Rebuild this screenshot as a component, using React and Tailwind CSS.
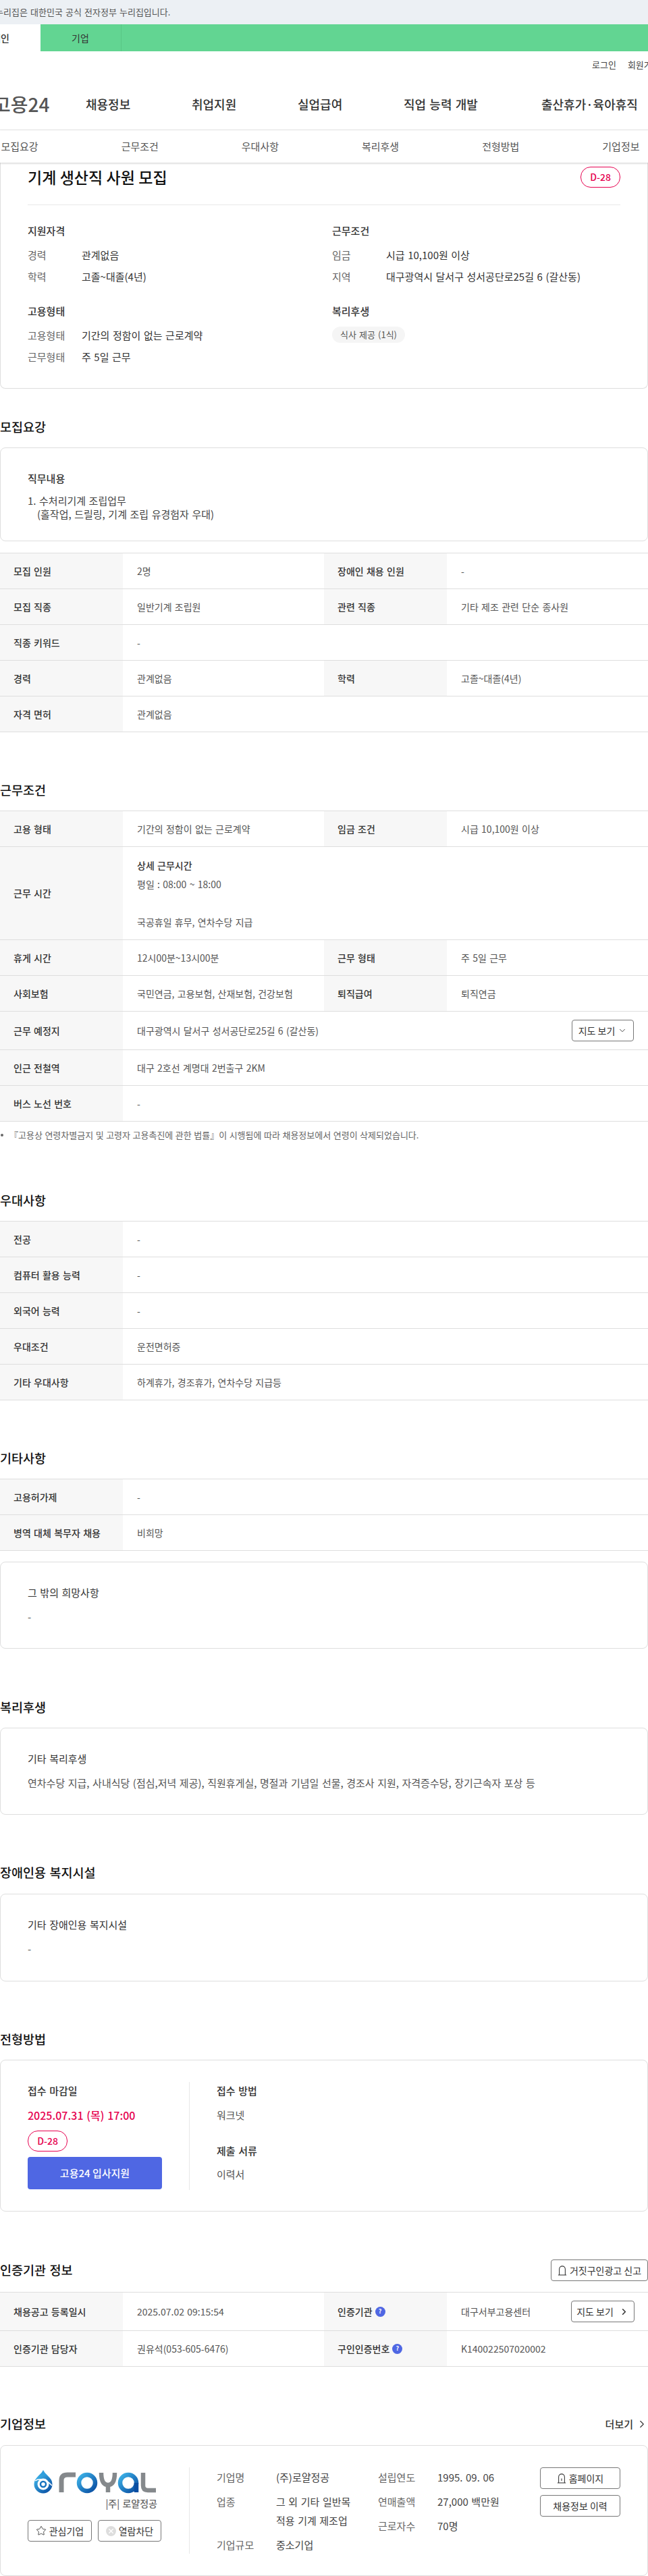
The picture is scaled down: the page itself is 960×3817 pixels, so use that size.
import React from 'react';
import { ChevronDown, ChevronRight, Star, X } from 'lucide-react';

const Lb = ({ children }) => (
  <div className="flex items-center bg-[#f7f7f7] pl-5 text-[14px] font-medium text-[#333]">{children}</div>
);
const Val = ({ children, span }) => (
  <div className={`flex items-center justify-between pl-[21px] text-[14px] text-[#555] ${span ? 'col-span-3' : ''}`}>{children}</div>
);

const Row = ({ a, b, c, d, h = 'h-[53px]', extra }) => (
  <div className={`grid ${h} grid-cols-[182px_298px_182px_298px] border-b border-[#dedede]`}>
    <Lb>{a}</Lb>
    {c === undefined ? (
      <Val span>{b}{extra}</Val>
    ) : (
      <>
        <Val>{b}</Val>
        <Lb>{c}</Lb>
        <Val>{d}{extra}</Val>
      </>
    )}
  </div>
);

const Table = ({ children, className = 'mt-4' }) => <div className={`${className} border-t border-[#dedede]`}>{children}</div>;

const Heading = ({ children, className }) => (
  <h2 className={`h-[30px] text-[18.5px] leading-[30px] font-medium text-[#111] ${className}`}>{children}</h2>
);

const Card = ({ children, className = '' }) => (
  <div className={`rounded-lg border border-[#dedede] bg-white ${className}`}>{children}</div>
);

const Badge = ({ className = '' }) => (
  <div className={`flex h-[31px] w-[59px] items-center justify-center rounded-[15px] border border-[#e6004f] text-[14px] font-medium text-[#e6004f] ${className}`}>D-28</div>
);

const InfoRow = ({ k, v }) => (
  <div className="flex h-8 items-center text-[15px]">
    <span className="w-20 text-[#666]">{k}</span>
    <span className="text-[#333]">{v}</span>
  </div>
);

const SubTitle = ({ children, className = '' }) => (
  <div className={`h-7 text-[15px] leading-7 font-medium text-[#333] ${className}`}>{children}</div>
);

const TextCard = ({ title, value, mt = 'mt-4', h = 'h-[129px]' }) => (
  <Card className={`${mt} ${h} pt-[31px] pl-10`}>
    <SubTitle className="!font-normal">{title}</SubTitle>
    <div className="mt-2 h-7 text-[15px] leading-7 text-[#555]">{value}</div>
  </Card>
);

const ArchIcon = ({ size = 16, dot }) => (
  <svg width={size} height={size + 4} viewBox="0 0 16 20" fill="none" stroke="#333" strokeWidth="1.2" className="shrink-0">
    <path d="M3 18V8a5 5 0 0 1 10 0v10" />
    <path d="M1 18h14" />
    {dot && <path d="M8 10.5v4" />}
  </svg>
);

const Help = () => (
  <span className="ml-1 flex h-[15px] w-[15px] items-center justify-center rounded-full bg-[#4f67e3] text-[9px] font-bold text-white">?</span>
);

const Logo = () => (
  <svg width="182" height="36" viewBox="0 0 182 36" fill="none">
    <defs>
      <linearGradient id="lg1" x1="0" y1="0" x2="1" y2="1">
        <stop offset="0" stopColor="#3db3e8" />
        <stop offset="1" stopColor="#0a4ea2" />
      </linearGradient>
    </defs>
    <path d="M14 0C11 6 6 8 3 14C8 9 20 9 25 14C22 8 17 6 14 0Z" fill="#2f9fdd" />
    <circle cx="14" cy="21" r="11" stroke="url(#lg1)" strokeWidth="5" />
    <circle cx="14" cy="21" r="4" fill="#fff" stroke="#1672bf" strokeWidth="2.5" />
    <path d="M2 16C8 12 18 13 27 23" stroke="#fff" strokeWidth="1.5" />
    <path d="M41 33V15Q41 7 50 7H62" stroke="#85898c" strokeWidth="7" />
    <circle cx="79" cy="19" r="12" stroke="url(#lg1)" strokeWidth="6.5" />
    <path d="M100 4Q100 22 110 22Q120 22 120 4M110 22V33" stroke="#85898c" strokeWidth="6.5" />
    <circle cx="140" cy="19" r="12" stroke="url(#lg1)" strokeWidth="6.5" />
    <path d="M152 19V33" stroke="#0a4ea2" strokeWidth="6.5" />
    <path d="M162 4V23Q162 30 169 30H181" stroke="#85898c" strokeWidth="6.5" />
  </svg>
);

const OutBtn = ({ children, className = '' }) => (
  <button className={`flex h-8 items-center justify-center rounded-[4px] border border-[#777] bg-white text-[14px] text-[#333] ${className}`}>{children}</button>
);

export default function App() {
  return (
    <div className="h-[3817px] w-[960px] overflow-hidden bg-white font-['Noto_Sans_CJK_KR','Noto_Sans',sans-serif] [word-spacing:1.2px] text-[#333]">
      {/* gov banner */}
      <div className="flex h-9 items-center overflow-hidden bg-[#ecf0f4] text-[13px] whitespace-nowrap text-[#555]">
        <span className="-ml-[23px]">이 누리집은 대한민국 공식 전자정부 누리집입니다.</span>
      </div>
      {/* user tabs */}
      <div className="flex h-10 overflow-hidden bg-[#62d592] text-[14px]">
        <div className="flex w-[60px] items-center justify-end bg-white pr-[46px]">
          <span className="font-medium whitespace-nowrap">개인</span>
        </div>
        <div className="flex w-[120px] items-center border-r border-[#58c685] pl-[46px]">기업</div>
      </div>
      {/* util */}
      <div className="flex h-10 items-center overflow-hidden pl-[877px] text-[13px] whitespace-nowrap text-[#444]">
        <span>로그인</span>
        <span className="ml-[17px]">회원가입</span>
      </div>
      {/* gnb */}
      <nav className="flex h-[77px] items-center overflow-hidden border-b border-[#e8e8e8] text-[18px] font-medium whitespace-nowrap text-[#333]">
        <span className="-ml-[10px] w-[137px] shrink-0 text-[28px] font-medium text-[#555]">고용24</span>
        <span className="w-[157px] shrink-0">채용정보</span>
        <span className="w-[157px] shrink-0">취업지원</span>
        <span className="w-[157px] shrink-0">실업급여</span>
        <span className="w-[204px] shrink-0">직업 능력 개발</span>
        <span className="shrink-0">출산휴가·육아휴직</span>
      </nav>
      {/* anchors */}
      <div className="relative z-10 h-12 overflow-hidden shadow-[0_1px_3px_rgba(0,0,0,0.2)]">
        <div className="-ml-[60px] grid h-12 w-[1069px] grid-cols-6 items-center text-center text-[15px] text-[#555]">
          <span>모집요강</span>
          <span>근무조건</span>
          <span>우대사항</span>
          <span>복리후생</span>
          <span>전형방법</span>
          <span>기업정보</span>
        </div>
      </div>

      {/* summary card */}
      <div className="h-[335px] rounded-b-lg border border-t-0 border-[#dedede] px-10">
        <div className="flex items-center justify-between border-b border-[#e8e8e8] pt-[6px] pb-[25px]">
          <h1 className="text-[23px] leading-[31px] font-medium [word-spacing:0.2px] text-[#111]">기계 생산직 사원 모집</h1>
          <Badge />
        </div>
        <div className="mt-6 grid grid-cols-[451px_1fr]">
          <div>
            <SubTitle>지원자격</SubTitle>
            <div className="mt-[6px]">
              <InfoRow k="경력" v="관계없음" />
              <InfoRow k="학력" v="고졸~대졸(4년)" />
            </div>
            <SubTitle className="mt-[21px]">고용형태</SubTitle>
            <div className="mt-[6px]">
              <InfoRow k="고용형태" v="기간의 정함이 없는 근로계약" />
              <InfoRow k="근무형태" v="주 5일 근무" />
            </div>
          </div>
          <div>
            <SubTitle>근무조건</SubTitle>
            <div className="mt-[6px]">
              <InfoRow k="임금" v="시급 10,100원 이상" />
              <InfoRow k="지역" v="대구광역시 달서구 성서공단로25길 6 (갈산동)" />
            </div>
            <SubTitle className="mt-[21px]">복리후생</SubTitle>
            <div className="mt-[9px] flex h-6 w-[108px] items-center justify-center rounded-xl bg-[#f5f5f5] text-[13px] text-[#555]">식사 제공 (1식)</div>
          </div>
        </div>
      </div>

      {/* 모집요강 */}
      <Heading className="mt-[41px]">모집요강</Heading>
      <Card className="mt-4 h-[139px] pt-[31px] pl-10">
        <SubTitle>직무내용</SubTitle>
        <div className="mt-[9px] text-[15px] leading-5 text-[#444]">
          <div>1. 수처리기계 조립업무</div>
          <div className="pl-[14px]">(홀작업, 드릴링, 기계 조립 유경험자 우대)</div>
        </div>
      </Card>
      <Table className="mt-[17px]">
        <Row a="모집 인원" b="2명" c="장애인 채용 인원" d="-" />
        <Row a="모집 직종" b="일반기계 조립원" c="관련 직종" d="기타 제조 관련 단순 종사원" />
        <Row a="직종 키워드" b="-" />
        <Row a="경력" b="관계없음" c="학력" d="고졸~대졸(4년)" />
        <Row a="자격 면허" b="관계없음" />
      </Table>

      {/* 근무조건 */}
      <Heading className="mt-[70px]">근무조건</Heading>
      <Table>
        <Row a="고용 형태" b="기간의 정함이 없는 근로계약" c="임금 조건" d="시급 10,100원 이상" />
        <Row
          a="근무 시간"
          h="h-[138px]"
          b={
            <div className="leading-7">
              <div className="font-medium text-[#333]">상세 근무시간</div>
              <div>평일 : 08:00 ~ 18:00</div>
              <div className="h-7" />
              <div>국공휴일 휴무, 연차수당 지급</div>
            </div>
          }
        />
        <Row a="휴게 시간" b="12시00분~13시00분" c="근무 형태" d="주 5일 근무" />
        <Row a="사회보험" b="국민연금, 고용보험, 산재보험, 건강보험" c="퇴직급여" d="퇴직연금" />
        <Row
          a="근무 예정지"
          h="h-[57px]"
          b="대구광역시 달서구 성서공단로25길 6 (갈산동)"
          extra={
            <OutBtn className="mr-[21px] w-[92px] text-[13px]">
              지도 보기<ChevronDown size={14} strokeWidth={1.5} className="ml-1" />
            </OutBtn>
          }
        />
        <Row a="인근 전철역" b="대구 2호선 계명대 2번출구 2KM" />
        <Row a="버스 노선 번호" b="-" />
      </Table>
      <div className="mt-[10px] flex h-5 items-center text-[13px] [word-spacing:0.6px] text-[#666]">
        <span className="mr-[9px] ml-[1px] h-[4px] w-[4px] rounded-full bg-[#666]" />
        『고용상 연령차별금지 및 고령자 고용촉진에 관한 법률』이 시행됨에 따라 채용정보에서 연령이 삭제되었습니다.
      </div>

      {/* 우대사항 */}
      <Heading className="mt-[71px]">우대사항</Heading>
      <Table>
        <Row a="전공" b="-" />
        <Row a="컴퓨터 활용 능력" b="-" />
        <Row a="외국어 능력" b="-" />
        <Row a="우대조건" b="운전면허증" />
        <Row a="기타 우대사항" b="하계휴가, 경조휴가, 연차수당 지급등" />
      </Table>

      {/* 기타사항 */}
      <Heading className="mt-[70px]">기타사항</Heading>
      <Table>
        <Row a="고용허가제" b="-" />
        <Row a="병역 대체 복무자 채용" b="비희망" />
      </Table>
      <TextCard title="그 밖의 희망사항" value="-" />

      {/* 복리후생 */}
      <Heading className="mt-[71px]">복리후생</Heading>
      <TextCard title="기타 복리후생" value="연차수당 지급, 사내식당 (점심,저녁 제공), 직원휴게실, 명절과 기념일 선물, 경조사 지원, 자격증수당, 장기근속자 포상 등" />

      {/* 장애인용 복지시설 */}
      <Heading className="mt-[70px]">장애인용 복지시설</Heading>
      <TextCard title="기타 장애인용 복지시설" value="-" mt="mt-[17px]" h="h-[130px]" />

      {/* 전형방법 */}
      <Heading className="mt-[70px]">전형방법</Heading>
      <Card className="mt-4 flex h-[225px] pt-8 pl-10">
        <div className="h-40 w-[240px] border-r border-[#e8e8e8] pr-10">
          <SubTitle className="-mt-px">접수 마감일</SubTitle>
          <div className="mt-2 h-7 text-[16px] leading-7 font-medium text-[#e6004f]">2025.07.31 (목) 17:00</div>
          <Badge className="mt-[9px]" />
          <button className="mt-2 h-12 w-full rounded-[4px] bg-[#4f67e3] text-[15px] font-medium text-white">고용24 입사지원</button>
        </div>
        <div className="pl-10">
          <SubTitle className="-mt-px">접수 방법</SubTitle>
          <div className="mt-2 h-7 text-[15px] leading-7 text-[#555]">워크넷</div>
          <SubTitle className="mt-[25px]">제출 서류</SubTitle>
          <div className="mt-[7px] h-7 text-[15px] leading-7 text-[#555]">이력서</div>
        </div>
      </Card>

      {/* 인증기관 정보 */}
      <div className="mt-[71px] flex h-8 items-center justify-between">
        <h2 className="text-[18.5px] font-medium text-[#111]">인증기관 정보</h2>
        <OutBtn className="w-[144px] gap-1 text-[14px]">
          <ArchIcon size={14} />
          거짓구인광고 신고
        </OutBtn>
      </div>
      <Table>
        <Row
          a="채용공고 등록일시"
          h="h-[57px]"
          b="2025.07.02 09:15:54"
          c={<>인증기관<Help /></>}
          d="대구서부고용센터"
          extra={
            <OutBtn className="mr-5 w-[94px]">
              지도 보기<ChevronRight size={15} strokeWidth={2.5} className="ml-2" />
            </OutBtn>
          }
        />
        <Row a="인증기관 담당자" b="권유석(053-605-6476)" c={<>구인인증번호<Help /></>} d="K140022507020002" />
      </Table>

      {/* 기업정보 */}
      <div className="mt-[70px] flex h-[30px] items-center justify-between">
        <h2 className="text-[18.5px] font-medium text-[#111]">기업정보</h2>
        <span className="flex items-center text-[15px] font-medium text-[#333]">더보기<ChevronRight size={18} strokeWidth={1.5} className="ml-1" /></span>
      </div>
      <Card className="mt-4 flex h-[194px] pt-8 pl-10">
        <div className="h-[128px] w-[240px] shrink-0 border-r border-[#e8e8e8] pr-10">
          <div className="mt-[4px] ml-[9px]"><Logo /></div>
          <div className="mt-[1px] h-6 pr-[7px] text-right text-[14px] leading-6 font-medium text-[#666]">|주| 로얄정공</div>
          <div className="mt-[13px] flex gap-[9px]">
            <OutBtn className="w-[95px] gap-1"><Star size={16} strokeWidth={1.3} />관심기업</OutBtn>
            <OutBtn className="w-[94px] gap-1">
              <span className="flex h-[15px] w-[15px] items-center justify-center rounded-full bg-[#ddd] text-white"><X size={11} strokeWidth={3} /></span>
              열람차단
            </OutBtn>
          </div>
        </div>
        <div className="w-[279px] shrink-0 pl-10 text-[15px] leading-7 text-[#444]">
          <div className="grid grid-cols-[88px_1fr] gap-y-2 pt-px">
            <span className="text-[#666]">기업명</span>
            <span>(주)로얄정공</span>
            <span className="text-[#666]">업종</span>
            <span>그 외 기타 일반목<br />적용 기계 제조업</span>
            <span className="text-[#666]">기업규모</span>
            <span>중소기업</span>
          </div>
        </div>
        <div className="w-[240px] shrink-0 text-[15px] leading-7 text-[#444]">
          <div className="grid grid-cols-[88px_1fr] gap-y-2 pt-px">
            <span className="text-[#666]">설립연도</span>
            <span>1995. 09. 06</span>
            <span className="text-[#666]">연매출액</span>
            <span>27,000 백만원</span>
            <span className="text-[#666]">근로자수</span>
            <span>70명</span>
          </div>
        </div>
        <div className="flex w-[119px] shrink-0 flex-col gap-[9px]">
          <OutBtn className="w-full gap-1"><ArchIcon size={14} dot />홈페이지</OutBtn>
          <OutBtn className="w-full">채용정보 이력</OutBtn>
        </div>
      </Card>
    </div>
  );
}
